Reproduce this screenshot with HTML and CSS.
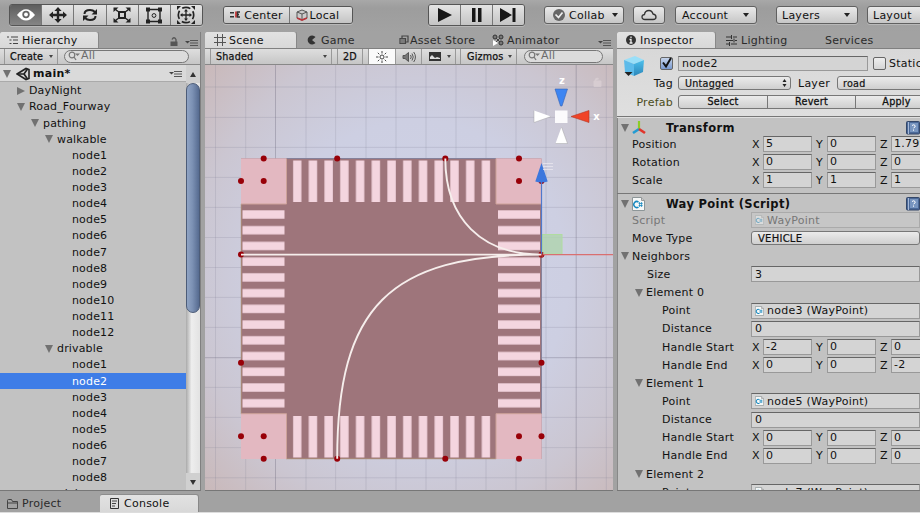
FILE: index.html
```html
<!DOCTYPE html>
<html lang="en">
<head>
<meta charset="utf-8">
<title>Scene editor</title>
<link rel="stylesheet" href="styles.css">
</head>
<body>
<svg class="defs" width="0" height="0">
  <defs>
    <linearGradient id="face" x1="0" y1="0" x2="0" y2="1"><stop offset="0" stop-color="#4dc0ec"/><stop offset="1" stop-color="#2c87bb"/></linearGradient>
    <symbol id="menu" viewBox="0 0 13 8"><path d="M0 2h5L2.500 4.600z" fill="#444"/><path d="M5 1.500h8M5 4h8M5 6.500h8" stroke="#555"/></symbol>
    <symbol id="search" viewBox="0 0 12 10"><circle cx="4" cy="4" r="2.800" fill="none" stroke="#777" stroke-width="1.200"/><path d="M6 6l2 3" stroke="#777" stroke-width="1.300"/><path d="M7 2.500h5L9.500 5z" fill="#777"/></symbol>
    <symbol id="cs" viewBox="0 0 13 14"><path d="M.5.500h9l3 3v10H.5z" fill="#f6f8f8" stroke="#8d9698"/><path d="M9.500.500v3h3" fill="#ccc" stroke="#999"/><path d="M6.500 5A3 3 0 1 0 6.500 10" fill="none" stroke="#1689c0" stroke-width="1.500"/><path d="M7.600 5v5M9.600 5v5M6.600 6.500h4M6.600 8.500h4" stroke="#1689c0" stroke-width=".8"/></symbol>
    <symbol id="help" viewBox="0 0 14 14"><rect x=".5" y=".5" width="13" height="12.500" rx="1" fill="#4c6a99" stroke="#344768"/><path d="M2.500 1v12" stroke="#a6b9d8"/><rect x="4" y="2" width="8" height="9" fill="#7895bf"/><path d="M6 4.500q2-1.500 3 0t-1.500 2.500M7.500 8.500v1.200" stroke="#fff" fill="none"/></symbol>
  </defs>
</svg>
<div class="app">
  <header class="topbar">
    <div class="group tools">
      <span class="btn on"><svg width="20" height="14" viewBox="0 0 20 14"><path d="M1 7Q10-4.500 19 7Q10 18 1 7z" fill="#fff"/><circle cx="10" cy="6.500" r="3.700" fill="#666"/><circle cx="10" cy="6.500" r="1.900" fill="#fff"/></svg></span>
      <span class="btn"><svg width="18" height="16" viewBox="0 0 18 16"><path d="M9 2v12M3 8h12" stroke="#222" stroke-width="2.400"/><path d="M9 0l3.600 4H5.400zM9 16l3.600-4H5.400zM0 8l4-3.600v7.200zM18 8l-4-3.600v7.200z" fill="#222"/></svg></span>
      <span class="btn"><svg width="16" height="14" viewBox="0 0 16 14"><path d="M2.500 6Q2.500 2 8 2Q11 2 13 4M13.500 8Q13.500 12 8 12Q5 12 3 10" fill="none" stroke="#222" stroke-width="2"/><path d="M15 1v5.500H9.500zM1 13V7.500h5.500z" fill="#222"/></svg></span>
      <span class="btn"><svg width="18" height="16" viewBox="0 0 18 16"><rect x="6" y="5" width="6" height="6" fill="none" stroke="#222" stroke-width="2"/><path d="M2 2l3 2.500M16 2l-3 2.500M2 14l3-2.500M16 14l-3-2.500" stroke="#222" stroke-width="1.500"/><path d="M.5.500h5l-5 4.500zM17.500.500h-5l5 4.500zM.5 15.500h5l-5-4.500zM17.500 15.500h-5l5-4.500z" fill="#222"/></svg></span>
      <span class="btn"><svg width="18" height="17" viewBox="0 0 18 17"><path d="M3 2.500h12v12H3z" fill="none" stroke="#222" stroke-width="1.400"/><path d="M1 .500h4v4H1zM13 .500h4v4h-4zM1 12.500h4v4H1zM13 12.500h4v4h-4z" fill="#222"/><circle cx="9" cy="8.500" r="1.900" fill="none" stroke="#222"/></svg></span>
      <span class="btn"><svg width="20" height="18" viewBox="0 0 20 18"><circle cx="10" cy="9" r="7.700" fill="none" stroke="#222" stroke-width="1.700" stroke-dasharray="8.500 3.600" stroke-dashoffset="4.200"/><path d="M10 4v10M5 9h10" stroke="#222" stroke-width="1.300"/><path d="M10 3l2 2.500H8zM10 15l2-2.500H8zM4 9l2.500-2v4zM16 9l-2.500-2v4zM1 0h4L1 4zM19 0h-4l4 4zM1 18h4l-4-4zM19 18h-4l4-4z" fill="#222"/></svg></span>
    </div>
    <div class="group pivots">
      <span class="btn center"><svg width="11" height="8" viewBox="0 0 11 8"><path d="M0 1h4v1.500H0zM0 5h4v1.500H0z" fill="#333"/><path d="M5 .500h2v6H5z" fill="#c44"/><path d="M10 1H7.500v5H10M7.500 3.500H9" stroke="#333" fill="none" stroke-width="1.500"/></svg>Center</span>
      <span class="btn local"><svg width="12" height="12" viewBox="0 0 12 12"><path d="M1 3l5-2 5 2v6l-5 2-5-2z" fill="#ccc" stroke="#555"/><path d="M1 3l5 2 5-2M6 5v6" fill="none" stroke="#555"/><path d="M1 9l5 2 5-2" stroke="#b8363c" fill="none" stroke-width="1.700"/></svg>Local</span>
    </div>
    <div class="group play">
      <span class="btn"><svg width="16" height="14"><path d="M1 0l14 7L1 14z" fill="#171717"/></svg></span>
      <span class="btn"><svg width="12" height="14"><path d="M1 0h3.500v14H1zM7 0h3.500v14H7z" fill="#171717"/></svg></span>
      <span class="btn"><svg width="17" height="14"><path d="M0 0l12 7L0 14zM12.500 0h3v14h-3z" fill="#171717"/></svg></span>
    </div>
    <span class="pill collab"><svg width="12" height="12"><circle cx="6" cy="6" r="6" fill="#666"/><path d="M2.500 5.500l3 3 4-5" fill="none" stroke="#eee" stroke-width="1.700"/></svg>Collab<i class="caret"></i></span>
    <span class="pill cloud"><svg width="16" height="12" viewBox="0 0 16 12"><path d="M4 10.500Q1 10.500 1 7.800Q1 6 3.500 5.500Q4 1.500 8 1.500Q11 1.500 12 5Q15 5.500 15 8Q15 10.500 12 10.500z" fill="none" stroke="#333" stroke-width="1.300"/></svg></span>
    <span class="pill account">Account<i class="caret"></i></span>
    <span class="pill layers">Layers<i class="caret"></i></span>
    <span class="pill layout">Layout</span>
  </header>

  <main class="panels">
    <section class="panel hierarchy">
      <div class="tabs">
        <span class="tab active tab-h"><svg width="11" height="9"><path d="M0 1h2M2.500 4h2M2.500 7.500h2M4 1h7M6 4h5M6 7.500h5" stroke="#444"/></svg>Hierarchy</span>
        <svg class="lock" width="8" height="9"><path d="M.5 4.500h7V9h-7z" fill="#555"/><path d="M2 2.500Q4-1 6 2.500V5" stroke="#555" fill="none" stroke-width="1.300"/></svg>
        <svg class="menu" width="13" height="8"><use href="#menu"/></svg>
      </div>
      <div class="bar">
        <span class="create">Create<i class="caret sm"></i></span>
        <span class="search h-search"><svg width="12" height="10"><use href="#search"/></svg>All</span>
      </div>
      <div class="hbody">
        <div class="tree">
          <div class="scene-row"><i class="tri"></i><svg width="15" height="14" viewBox="0 0 15 14"><path d="M1 7L10 1.500l3 1v9l-3 1z" fill="none" stroke="#222" stroke-width="1.600"/><path d="M2 7h6l3.500-5M8 7l3.500 5" fill="none" stroke="#222" stroke-width="1.700"/></svg><b>main*</b><svg class="row-menu" width="13" height="8"><use href="#menu"/></svg></div>
          <div class="row l1"><i class="tri shut"></i>DayNight</div>
          <div class="row l1"><i class="tri"></i>Road_Fourway</div>
          <div class="row l2"><i class="tri"></i>pathing</div>
          <div class="row l3"><i class="tri"></i>walkable</div>
          <div class="row leaf">node1</div>
          <div class="row leaf">node2</div>
          <div class="row leaf">node3</div>
          <div class="row leaf">node4</div>
          <div class="row leaf">node5</div>
          <div class="row leaf">node6</div>
          <div class="row leaf">node7</div>
          <div class="row leaf">node8</div>
          <div class="row leaf">node9</div>
          <div class="row leaf">node10</div>
          <div class="row leaf">node11</div>
          <div class="row leaf">node12</div>
          <div class="row l3"><i class="tri"></i>drivable</div>
          <div class="row leaf">node1</div>
          <div class="row leaf sel">node2</div>
          <div class="row leaf">node3</div>
          <div class="row leaf">node4</div>
          <div class="row leaf">node5</div>
          <div class="row leaf">node6</div>
          <div class="row leaf">node7</div>
          <div class="row leaf">node8</div>
          <div class="row l2"><i class="tri"></i>models</div>
        </div>
        <div class="scroll"><i class="arrow up"></i><div class="track"><div class="thumb"></div></div><i class="arrow down"></i></div>
      </div>
    </section>

    <section class="panel scene">
      <div class="tabs">
        <span class="tab active tab-s"><svg width="12" height="12"><path d="M3.500 0v12M8.500 0v12M0 3.500h12M0 8.500h12" stroke="#555"/></svg>Scene</span>
        <span class="tab tab-g"><svg width="9" height="10"><path d="M8.500 2A4.500 4.500 0 1 0 8.500 8L5 5z" fill="#333"/></svg>Game</span>
        <span class="tab tab-a"><svg width="10" height="10"><path d="M1 3.500h5.500v5H1zM3 3V1h6v6H7" fill="none" stroke="#444" stroke-width="1.200"/><path d="M3 3.500v5M5 3.500v5" stroke="#555"/></svg>Asset Store</span>
        <span class="tab tab-n"><svg width="12" height="12"><path d="M3 3l6 6M9 3L3 9" stroke="#444"/><circle cx="3" cy="3" r="2" fill="#777" stroke="#333"/><circle cx="9" cy="3" r="2" fill="#777" stroke="#333"/><circle cx="9" cy="9" r="2" fill="#777" stroke="#333"/><path d="M1 6l5 3-5 3z" fill="#fff"/></svg>Animator</span>
        <svg class="menu" width="13" height="8"><use href="#menu"/></svg>
      </div>
      <div class="bar">
        <span class="cell shaded">Shaded<i class="caret sm"></i></span>
        <span class="cell two">2D</span>
        <span class="cell sun"><svg width="12" height="12"><circle cx="6" cy="6" r="2" fill="none" stroke="#444"/><path d="M6 0v2.500M6 9.500V12M0 6h2.500M9.500 6H12M1.800 1.800l1.500 1.500M8.700 8.700l1.500 1.500M10.200 1.800L8.700 3.300M3.300 8.700l-1.500 1.500" stroke="#444"/></svg></span>
        <span class="cell snd"><svg width="14" height="12"><path d="M1 4.500h2L6.500 1.500v9L3 7.500H1z" fill="#777" stroke="#555"/><path d="M8.500 4q1.500 2 0 4M10 2.500q2.500 3.500 0 7M11.700 1q3.500 5 0 10" fill="none" stroke="#555"/></svg></span>
        <span class="cell pic"><svg width="12" height="9"><rect width="12" height="9" fill="#333"/><path d="M1 7V5l2-2 3 3 2-1 3 1v1z" fill="#ddd"/></svg><i class="caret sm"></i></span>
        <span class="cell giz">Gizmos<i class="caret sm"></i></span>
        <span class="search s-search"><svg width="12" height="10"><use href="#search"/></svg>All</span>
      </div>
      <svg class="view" width="408" height="426" viewBox="205 65 408 426">
        <defs>
          <radialGradient id="sky" cx=".52" cy=".5" r=".74"><stop offset="0" stop-color="#cfd3e8"/><stop offset=".5" stop-color="#cdcfe2"/><stop offset=".75" stop-color="#cbc6d1"/><stop offset="1" stop-color="#c9b7b7"/></radialGradient>
          <pattern id="vs" x="292.700" y="0" width="15.730" height="600" patternUnits="userSpaceOnUse"><rect x=".3" y="0" width="8.400" height="600" fill="#f4d5df"/></pattern>
          <pattern id="hs" x="0" y="210" width="700" height="15.730" patternUnits="userSpaceOnUse"><rect x="0" y=".3" width="700" height="8.400" fill="#f4d5df"/></pattern>
        </defs>
        <rect x="205" y="65" width="408" height="426" fill="url(#sky)"/>
        <path d="M215.500 65v426M245.700 65v426M306 65v426M335.600 65v426M366 65v426M396 65v426M426 65v426M456 65v426M486 65v426M516 65v426M546 65v426M606.300 65v426M205 87h408M205 117.400h408M205 147.400h408M205 177.400h408M205 207.400h408M205 237.500h408M205 267.500h408M205 297.400h408M205 327.400h408M205 387.400h408M205 417.400h408M205 447.600h408M205 477.800h408" stroke="#77748a" stroke-opacity=".18"/>
        <path d="M275.500 65v426M576.200 65v426M205 357.700h408" stroke="#666478" stroke-opacity=".34"/>
        <rect x="241" y="158.500" width="300.500" height="300.500" fill="#9e757b"/>
        <path d="M286 158.500h210M541.500 204v210" stroke="#85819a"/>
        <path d="M241.300 204v210M286 458.700h210" stroke="#a98b78"/>
        <path d="M241 158.500h45.500V204H241zM496 158.500h45.500V204H496zM241 413.700h45.500V459H241zM496 413.700h45.500V459H496z" fill="#e3b8c1"/>
        <path d="M241 204h45.500v-45.500M541.500 204H496v-45.500M241 413.700h45.500V459M541.500 413.700H496V459" fill="none" stroke="#cda299"/>
        <rect x="292.700" y="160.500" width="198" height="41.500" fill="url(#vs)"/>
        <rect x="292.700" y="416" width="198" height="41.500" fill="url(#vs)"/>
        <rect x="242.500" y="210" width="42" height="198" fill="url(#hs)"/>
        <rect x="498" y="210" width="42" height="198" fill="url(#hs)"/>
        <g fill="#980008">
          <circle cx="263.700" cy="158.500" r="3"/><circle cx="337.200" cy="158.500" r="3"/><circle cx="445.300" cy="158.500" r="3"/><circle cx="519" cy="158.500" r="3"/>
          <circle cx="241" cy="181" r="3"/><circle cx="263.700" cy="181" r="3"/><circle cx="519" cy="181" r="3"/><circle cx="541.500" cy="181" r="3"/>
          <circle cx="241" cy="254.600" r="3"/><circle cx="541.500" cy="254.600" r="3"/><circle cx="241" cy="362.700" r="3"/><circle cx="541.500" cy="362.700" r="3"/>
          <circle cx="241" cy="436.200" r="3"/><circle cx="263.700" cy="436.200" r="3"/><circle cx="519" cy="436.200" r="3"/><circle cx="541.500" cy="436.200" r="3"/>
          <circle cx="263.700" cy="458.800" r="3"/><circle cx="337.200" cy="458.800" r="3"/><circle cx="445.300" cy="458.800" r="3"/><circle cx="519" cy="458.800" r="3"/>
        </g>
        <path d="M241 254.600H541.500M445.300 158.500C445.300 218.500 481.500 254.600 541.500 254.600M541.500 254.600C389.500 254.600 337.200 307 337.200 458.800" fill="none" stroke="#f6eeec" stroke-width="1.900"/>
        <rect x="542.500" y="234.500" width="19.500" height="19.500" fill="#b0d3b0" fill-opacity=".85" stroke="#b0dca0"/>
        <path d="M541.500 254.700H613" stroke="#d96f70" stroke-width="1.300"/>
        <path d="M541.500 254V181" stroke="#4f79cc" stroke-width="1.200"/>
        <path d="M541.500 163L535.300 181.500q6.200 2 12.400 0z" fill="#3c77dd"/>
        <path d="M542.500 252v5h-3" fill="none" stroke="#a33" stroke-width="1.200"/>
        <path d="M543 163.500h10M543 166.500h10M543 169.500h10" stroke="#e8e6ee" stroke-opacity=".8"/>
        <text x="562" y="84" class="axis">z</text>
        <text x="596.500" y="120" class="axis">x</text>
        <path d="M555 89h12.500l-5.500 17h-1.500z" fill="#3d85f2" stroke="#3561b4" stroke-width=".6"/>
        <path d="M555 110.500h12.500V123H555z" fill="#fbfafc"/>
        <path d="M534 110.500l17 6-17 6zM561.500 127l6 16.500h-12z" fill="#fff"/><path d="M534 110.500v12l17-6M555.500 143.500h12L561.500 127" fill="none" stroke="#999" stroke-opacity=".6" stroke-width=".7"/>
        <path d="M571 116.500l18-6v12z" fill="#f04428" stroke="#b33624" stroke-width=".6"/>
        <path d="M594 81h7v5.500h-7zM595.300 81v-2q2-2 3.500 0" fill="#e0d6d9" stroke="#e0d6d9" opacity=".6"/>
      </svg>
    </section>

    <section class="panel inspector">
      <div class="tabs">
        <span class="tab active tab-i"><svg width="10" height="10"><circle cx="5" cy="5" r="5" fill="#333"/><path d="M5 1.500v1.500M3.500 4.500H5V8M3.500 8h3" stroke="#eee" fill="none" stroke-width="1.300"/></svg>Inspector</span>
        <span class="tab tab-l"><svg width="11" height="11"><path d="M0 2h5M7 2h4M0 5.500h7M9 5.500h2M0 9h3M5 9h6M5.500 0v4M8 3.500v4M3.500 7v4" stroke="#333"/></svg>Lighting</span>
        <span class="tab tab-v">Services</span>
      </div>
      <div class="object">
        <svg class="cube" width="24" height="24" viewBox="0 0 24 24"><path d="M2 5l11-4 9 4-10 4z" fill="#9adff8"/><path d="M2 5l10 4v12L3 17z" fill="#5dbbea"/><path d="M22 5L12 9v12l9-4z" fill="url(#face)"/><path d="M2.500 17h8L6.500 21z" fill="#222"/></svg>
        <div class="object-rows">
          <div class="orow o1"><i class="check on"><svg width="13" height="12"><path d="M3 5.500l3 4L11 1" fill="none" stroke="#111" stroke-width="2"/></svg></i><span class="field name">node2</span><i class="check"></i><span class="static">Static</span></div>
          <div class="orow o2"><span class="lab">Tag</span><span class="drop tag">Untagged<svg width="5" height="8"><path d="M.5 3h4l-2-3zM.5 5h4l-2 3z" fill="#222"/></svg></span><span class="lab2">Layer</span><span class="drop lay">road</span></div>
          <div class="orow o3"><span class="lab prefab">Prefab</span><span class="seg"><b>Select</b><b>Revert</b><b>Apply</b></span></div>
        </div>
      </div>
      <div class="component">
        <div class="chead"><i class="tri"></i><svg width="14" height="14" viewBox="0 0 14 14"><path d="M7 8V0" stroke="#8ccc27" stroke-width="2.200"/><path d="M7 8l-6 4" stroke="#249bd2" stroke-width="2.600"/><path d="M7 8l6 4" stroke="#e0352b" stroke-width="2.600"/></svg><b>Transform</b><svg class="help" width="14" height="14"><use href="#help"/></svg></div>
        <div class="prop"><label>Position</label><span class="xyz"><i>X</i><u>5</u><i>Y</i><u>0</u><i>Z</i><u>1.799</u></span></div>
        <div class="prop"><label>Rotation</label><span class="xyz"><i>X</i><u>0</u><i>Y</i><u>0</u><i>Z</i><u>0</u></span></div>
        <div class="prop"><label>Scale</label><span class="xyz"><i>X</i><u>1</u><i>Y</i><u>1</u><i>Z</i><u>1</u></span></div>
      </div>
      <div class="component script">
        <div class="chead"><i class="tri"></i><svg width="13" height="14"><use href="#cs"/></svg><b class="wp">Way Point (Script)</b><svg class="help" width="14" height="14"><use href="#help"/></svg></div>
        <div class="prop dim"><label>Script</label><span class="field ref"><svg width="9" height="10"><use href="#cs"/></svg>WayPoint</span></div>
        <div class="prop"><label>Move Type</label><span class="drop wide">VEHICLE</span></div>
        <div class="prop fold f0"><i class="tri"></i><label>Neighbors</label></div>
        <div class="prop d1"><label>Size</label><span class="field">3</span></div>
        <div class="prop fold f1"><i class="tri"></i><label>Element 0</label></div>
        <div class="prop d2"><label>Point</label><span class="field ref"><svg width="9" height="10"><use href="#cs"/></svg>node3 (WayPoint)</span></div>
        <div class="prop d2"><label>Distance</label><span class="field">0</span></div>
        <div class="prop d2"><label>Handle Start</label><span class="xyz"><i>X</i><u>-2</u><i>Y</i><u>0</u><i>Z</i><u>0</u></span></div>
        <div class="prop d2"><label>Handle End</label><span class="xyz"><i>X</i><u>0</u><i>Y</i><u>0</u><i>Z</i><u>-2</u></span></div>
        <div class="prop fold f1"><i class="tri"></i><label>Element 1</label></div>
        <div class="prop d2"><label>Point</label><span class="field ref"><svg width="9" height="10"><use href="#cs"/></svg>node5 (WayPoint)</span></div>
        <div class="prop d2"><label>Distance</label><span class="field">0</span></div>
        <div class="prop d2"><label>Handle Start</label><span class="xyz"><i>X</i><u>0</u><i>Y</i><u>0</u><i>Z</i><u>0</u></span></div>
        <div class="prop d2"><label>Handle End</label><span class="xyz"><i>X</i><u>0</u><i>Y</i><u>0</u><i>Z</i><u>0</u></span></div>
        <div class="prop fold f1"><i class="tri"></i><label>Element 2</label></div>
        <div class="prop d2"><label>Point</label><span class="field ref"><svg width="9" height="10"><use href="#cs"/></svg>node7 (WayPoint)</span></div>
      </div>
    </section>
  </main>

  <footer class="bottom">
    <span class="tab tab-p"><svg width="12" height="10"><path d="M.5 9.500V1.500q0-1 1-1h3l1 2h5v7zM.5 4h10" fill="none" stroke="#444"/></svg>Project</span>
    <span class="tab active tab-c"><svg width="9" height="11"><path d="M.5.500h8v10h-8z" fill="#ddd" stroke="#333"/><path d="M2 3h5M2 5.500h4M2 8h3" stroke="#444"/></svg>Console</span>
  </footer>
</div>
</body>
</html>
```
FILE: styles.css
```css
* { box-sizing: border-box; }
body {
  margin: 0;
  font-family: "DejaVu Sans", sans-serif;
  font-size: 11px;
  letter-spacing: .25px;
  color: #111;
  background: #a2a2a2;
}
i { font-style: normal; }
u { text-decoration: none; }
svg { flex: none; display: block; }
.defs { position: absolute; }
.app { width: 920px; height: 513px; overflow: hidden; display: flex; flex-direction: column; white-space: nowrap; }

.topbar { height: 32px; flex: none; display: flex; align-items: flex-start; padding: 4px 0 0 9px; background: linear-gradient(#a8a8a8, #9d9d9d 8px, #a2a2a2); }
.topbar > * { flex: none; }
.group { display: flex; border: 1px solid #555; border-radius: 3px; overflow: hidden; box-shadow: 0 1px 0 #b8b8b8; }
.btn { display: flex; align-items: center; justify-content: center; background: linear-gradient(#e4e4e4, #c4c4c4); border-left: 1px solid #777; }
.btn:first-child { border-left: 0; }
.btn.on { background: linear-gradient(#5e5e5e, #858585); }
.tools { width: 194px; height: 22px; }
.tools .btn, .play .btn { flex: 1; }
.pivots { width: 130px; height: 18px; margin: 2px 0 0 20px; }
.center { width: 65px; gap: 3px; }
.local { flex: 1; gap: 2px; padding-right: 7px; }
.play { width: 97px; height: 22px; margin-left: 75px; }
.pill { height: 18px; margin-top: 2px; display: flex; align-items: center; border: 1px solid #606060; border-radius: 3px; background: linear-gradient(#e9e9e9, #c6c6c6); box-shadow: 0 1px 0 #b8b8b8; }
.caret { width: 0; height: 0; border: 3px solid transparent; border-top: 4px solid #222; border-bottom: 0; margin-left: auto; }
.caret.sm { border-width: 3px 2.5px 0; border-top-color: #444; }
.collab { width: 80px; margin-left: 19px; padding: 0 5px 0 8px; gap: 4px; }
.cloud { width: 32px; margin-left: 9px; justify-content: center; }
.account { width: 82px; margin-left: 10px; padding: 0 7px 0 6px; }
.layers { width: 82px; margin-left: 19px; padding: 0 7px 0 5px; }
.layout { width: 80px; margin-left: 9px; padding-left: 5px; }

.panels { height: 459px; flex: none; display: flex; gap: 4px; }
.panel { overflow: hidden; border-bottom: 1px solid #777; }
.tabs { display: flex; height: 16px; align-items: stretch; }
.tab { display: flex; align-items: center; color: #2b2b2b; }
.tab.active { background: linear-gradient(#e2e2e2, #d8d8d8); border-radius: 2px 3px 0 0; border-right: 1px solid #888; box-shadow: 0 -1px 0 #8d8d8d; color: #111; }
.bar { height: 17px; display: flex; align-items: stretch; background: linear-gradient(#dedede, #c6c6c6); border-top: 1px solid #808080; border-bottom: 1px solid #888; font-size: 9.6px; letter-spacing: .2px; -webkit-text-stroke: .25px #111; }
.search { height: 13px; margin-top: 1px; border: 1px solid #777; border-radius: 8px; background: #dcdcdc; display: flex; align-items: center; padding-left: 3px; gap: 1px; color: #6b6b6b; font-size: 11px; line-height: 11px; padding-bottom: 2px; -webkit-text-stroke: 0; }

.hierarchy { width: 201px; background: #c2c2c2; border-right: 1px solid #808080; }
.hierarchy .tabs, .scene .tabs, .inspector .tabs { background: #a2a2a2; }
.tab-h { width: 99px; padding-left: 7px; gap: 4px; }
.lock { margin: 5px 0 0 71px; }
.menu { margin: 7px 0 0 auto; }
.hierarchy .menu { margin-right: 2px; }
.create { width: 54px; margin-left: 4px; padding: 0 4px 0 5px; border-left: 1px solid #999; border-right: 1px solid #999; display: flex; align-items: center; }
.h-search { width: 125px; margin-left: 6px; }
.hbody { display: flex; height: 426px; }
.tree { width: 186px; overflow: hidden; }
.scene-row { height: 17.3px; display: flex; align-items: center; background: #dadada; border-bottom: 1px solid #aaa; padding: 1px 0 0 3px; }
.scene-row svg:first-of-type { margin: 0 2px 0 5px; }
.scene-row .row-menu { margin: 0 4px 0 auto; }
.row { height: 16.14px; display: flex; align-items: center; letter-spacing: .15px; padding-top: 1px; }
.tri { width: 0; height: 0; flex: none; border: 4.5px solid transparent; border-top: 8px solid #717171; border-bottom: 0; }
.tri.shut { border: 4.5px solid transparent; border-left: 8px solid #717171; border-right: 0; }
.row .tri { margin-right: 4px; }
.l1 { padding-left: 17px; }
.l1 .shut { margin-right: 4px; }
.l2 { padding-left: 31px; }
.l3 { padding-left: 45px; }
.leaf { padding-left: 72px; }
.sel { background: #3e7de7; color: #fff; }
.scroll { width: 14px; display: flex; flex-direction: column; align-items: center; background: linear-gradient(90deg, #aaa, #eee 40%, #e2e2e2); }
.arrow { width: 14px; height: 18px; flex: none; display: flex; align-items: center; justify-content: center; background: #d0d0d0; }
.arrow::before { content: ""; border: 3.5px solid transparent; border-bottom: 5px solid #333; border-top: 0; }
.arrow.down::before { border: 3.5px solid transparent; border-top: 5px solid #333; border-bottom: 0; }
.track { flex: 1; width: 14px; border-radius: 7px; }
.thumb { height: 230px; border-radius: 7px; border: 1px solid #4c5c78; background: linear-gradient(90deg, #90a4c4, #7c91b4 45%, #566b90); }

.scene { width: 408px; }
.tab-s { width: 92px; padding-left: 9px; gap: 3px; }
.tab-g { padding-left: 10px; gap: 5px; width: 102px; }
.tab-a { gap: 1px; width: 92px; }
.tab-n { gap: 3px; padding-left: 1px; }
.scene .menu { margin-right: 2px; }
.cell { display: flex; align-items: center; justify-content: center; border-left: 1px solid #999; }
.shaded { width: 122px; margin-left: 5px; padding: 0 4px 0 5px; border-right: 1px solid #999; justify-content: flex-start; }
.two { width: 26px; margin-left: 5px; border-right: 1px solid #999; }
.sun { width: 27px; margin-left: 5px; background: #fafafa; }
.snd { width: 26px; }
.pic { width: 35px; padding: 0 4px 0 7px; border-right: 1px solid #999; }
.giz { width: 57px; margin-left: 4px; padding: 0 4px 0 6px; border-right: 1px solid #999; }
.s-search { width: 79px; margin-left: 7px; }
.axis { font: bold 10px "DejaVu Sans", sans-serif; fill: #fff; text-anchor: middle; }

.inspector { flex: 1; background: #c2c2c2; min-width: 0; box-shadow: inset 1px 0 0 #888; }
.tab-i { width: 99px; padding-left: 9px; gap: 4px; }
.tab-l { padding-left: 10px; gap: 4px; width: 109px; }
.object { height: 69px; display: flex; background: linear-gradient(#d8d8d8, #dfdfdf); border-top: 1px solid #808080; border-bottom: 1px solid #777; padding: 6px 0 0 5px; }
.object-rows { display: flex; flex-direction: column; margin-left: 3px; }
.orow { display: flex; align-items: center; }
.o1 { height: 17px; padding-left: 11px; }
.o2 { height: 22px; }
.o3 { height: 16px; }
.check { width: 13px; height: 13px; flex: none; border: 1px solid #666; border-radius: 2px; background: linear-gradient(#eee, #d5d5d5); }
.check svg { margin: -1px; }
.check.on { background: linear-gradient(#c5d3ea, #7999cf); }
.field { height: 15px; border: 1px solid #999; border-top-color: #666; background: #d4d4d4; display: flex; align-items: center; padding-left: 3px; }
.name { width: 190px; margin: 0 5px 0 5px; }
.static { margin-left: 3px; }
.lab { width: 25px; flex: none; display: flex; justify-content: flex-end; margin-left: -1px; }
.drop { height: 14px; border: 1px solid #777; border-radius: 3px; background: linear-gradient(#ebebeb, #cfcfcf); font-size: 9.6px; display: flex; align-items: center; padding-left: 6px; -webkit-text-stroke: .2px #111; }
.tag { width: 113px; margin-left: 5px; justify-content: space-between; padding-right: 3px; }
.lab2 { margin-left: 7px; width: 33px; }
.lay { width: 120px; margin-left: 6px; padding-left: 5px; }
.lab.prefab { width: 45px; margin-left: -21px; color: #4b4c20; }
.seg { display: flex; margin-left: 5px; border: 1px solid #777; border-radius: 3px; background: linear-gradient(#ebebeb, #cfcfcf); height: 14px; font-size: 9.6px; -webkit-text-stroke: .3px #111; }
.seg b { width: 88px; flex: none; font-weight: normal; text-align: center; line-height: 12px; border-left: 1px solid #777; }
.seg b:first-child { border-left: 0; }
.seg b:last-child { width: 82px; }
.component { padding-left: 4px; border-top: 1px solid #e0e0e0; box-shadow: inset 1px 0 0 #888; height: 76px; }
.component.script { height: auto; border-top: 1px solid #777; }
.chead { height: 17px; display: flex; align-items: center; font-size: 11.5px; letter-spacing: .35px; padding-top: 3px; }
.chead svg { margin-left: 3px; }
.chead b { margin-left: 20px; width: 230px; }
.chead b.wp { margin-left: 21px; }
.chead .help { margin-left: 17px; }
.prop { height: 18.15px; display: flex; align-items: center; padding-left: 11px; }
.prop label { width: 119px; flex: none; }
.d1 { padding-left: 26px; }
.d1 label { width: 104px; }
.d2 { padding-left: 41px; }
.d2 label { width: 89px; }
.fold .tri { margin-right: 3px; }
.f0 { padding-left: 0; }
.f1 { padding-left: 14px; }
.prop .field { flex: 1; height: 16px; }
.ref { gap: 3px; }
.dim { color: #777; }
.dim .ref { background: #c6c6c6; border-color: #aaa; }
.dim svg { opacity: .45; }
.wide { flex: 1; font-size: 10px; }
.xyz { display: flex; align-items: center; }
.xyz i { width: 12px; padding-left: 1px; }
.xyz u { width: 49px; height: 16px; border: 1px solid #999; border-top-color: #666; background: #d4d4d4; margin-right: 3px; padding-left: 2px; line-height: 14px; overflow: hidden; }

.bottom { flex: 1; display: flex; padding-top: 4px; border-bottom: 1px solid #ddd; }
.tab-p { width: 100px; padding-left: 7px; gap: 3px; }
.tab-c { width: 99px; padding-left: 10px; gap: 5px; }
```
